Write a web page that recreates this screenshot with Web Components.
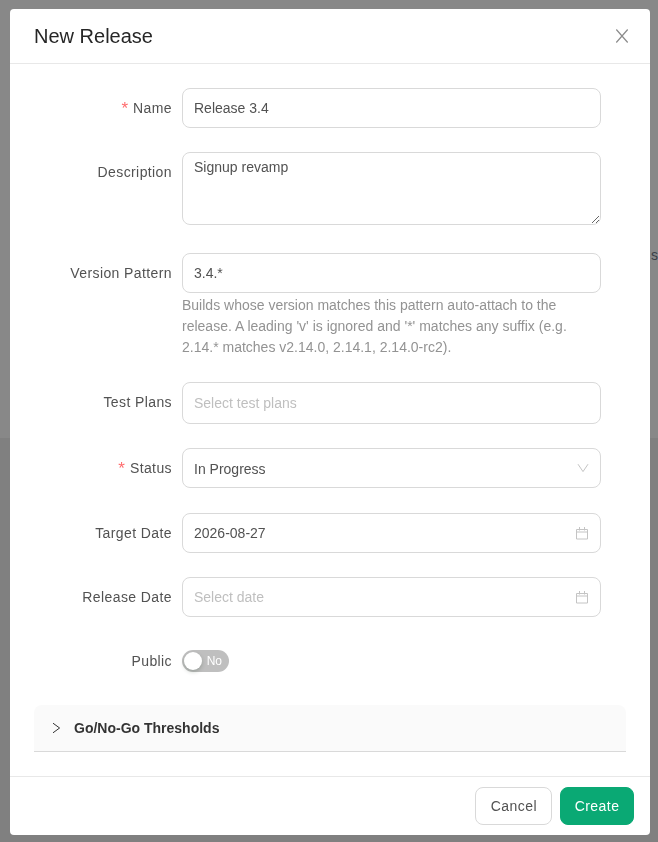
<!DOCTYPE html>
<html>
<head>
<meta charset="utf-8">
<title>New Release</title>
<style>
  html, body { margin: 0; height: 100%; overflow: hidden; }
  body { font-family: "Liberation Sans", Arial, sans-serif; }
</style>
</head>
<body>
<release-backdrop>
  <release-modal heading="New Release">
    <form-row label="Name" required><text-box>Release 3.4</text-box></form-row>
    <form-row label="Description" gap="28"><text-area-box>Signup revamp</text-area-box></form-row>
    <form-row label="Version Pattern">
      <text-box>3.4.*</text-box>
      <span slot="help">Builds whose version matches this pattern auto-attach to the release. A leading 'v' is ignored and '*' matches any suffix (e.g. 2.14.* matches v2.14.0, 2.14.1, 2.14.0-rc2).</span>
    </form-row>
    <form-row label="Test Plans"><text-box placeholder="Select test plans" tall></text-box></form-row>
    <form-row label="Status" required gap="25"><text-box icon="chevron" select>In Progress</text-box></form-row>
    <form-row label="Target Date"><text-box icon="calendar">2026-08-27</text-box></form-row>
    <form-row label="Release Date"><text-box icon="calendar" placeholder="Select date"></text-box></form-row>
    <form-row label="Public"><toggle-switch>No</toggle-switch></form-row>
    <collapse-panel>Go/No-Go Thresholds</collapse-panel>
    <action-button slot="footer">Cancel</action-button>
    <action-button slot="footer" primary>Create</action-button>
  </release-modal>
</release-backdrop>

<script>
// small helper, every element does the same thing in its constructor
function shadow(el, html) {
  el.attachShadow({ mode: 'open' }).innerHTML = html
}

const ICONS = {
  chevron: `<svg width="12" height="12" viewBox="0 0 12 12" fill="none" stroke="#c4c4c4" stroke-width="1"><path d="M1 2.2 6 9.6l5-7.4"/></svg>`,
  calendar: `<svg width="14" height="14" viewBox="0 0 14 14" fill="none" stroke="#c4c4c4" stroke-width="1"><path d="M1.5 3.5h11v9.5h-11zM1.5 6h11M4.5 1v3.5M9.5 1v3.5"/></svg>`,
}

class ReleaseBackdrop extends HTMLElement {
  constructor() {
    super()
    shadow(this, `
      <style>
        :host {
          display: block;
          height: 842px;
          padding: 9px 8px 7px 10px;
          box-sizing: border-box;
          position: relative;
          background: linear-gradient(#888 0 438px, #808080 438px);
        }
        .peek { position: absolute; left: 651px; top: 247px; font-size: 14px; color: #3a4048; }
      </style>
      <span class="peek">s</span>
      <slot></slot>
    `)
  }
}

class ReleaseModal extends HTMLElement {
  constructor() {
    super()
    shadow(this, `
      <style>
        :host {
          display: flex;
          flex-direction: column;
          position: relative;
          height: 826px;
          background: #fff;
          border-radius: 4px;
          overflow: hidden;
          will-change: transform;
        }
        header {
          flex: none;
          display: flex;
          align-items: center;
          justify-content: space-between;
          height: 54px;
          padding: 0 20px 0 24px;
          border-bottom: 1px solid #e8e8e8;
          font-size: 20px;
          color: #262626;
        }
        button { all: unset; display: flex; }
        main { flex: 1; min-height: 0; padding: 24px 24px 0; }
        footer {
          flex: none;
          display: flex;
          justify-content: flex-end;
          gap: 8px;
          padding: 10px 16px;
          height: 38px;
          border-top: 1px solid #e8e8e8;
        }
      </style>
      <header>
        <span></span>
        <button aria-label="Close"><svg width="16" height="16" viewBox="0 0 16 16" fill="none" stroke="#8c8c8c" stroke-width="1.2"><path d="M2.3 1.5 13.7 14.5M13.7 1.5 2.3 14.5"/></svg></button>
      </header>
      <main><slot></slot></main>
      <footer><slot name="footer"></slot></footer>
    `)
    this.shadowRoot.querySelector('header span').textContent = this.getAttribute('heading')
  }
}

class FormRow extends HTMLElement {
  constructor() {
    super()
    shadow(this, `
      <style>
        :host {
          display: grid;
          grid-template-columns: 138px 419px;
          column-gap: 10px;
          font-size: 14px;
          letter-spacing: .4px;
          color: #525252;
        }
        label {
          display: flex;
          justify-content: flex-end;
          align-items: center;
          height: 40px;
        }
        i { color: #ff6b6d; font-style: normal; margin-right: 5px; font-size: 17px; line-height: 1; letter-spacing: 0; }
        ::slotted(span) { display: block; margin-top: 2px; font-size: 14px; line-height: 21px; letter-spacing: 0; color: #939393; }
      </style>
      <label></label>
      <div><slot></slot><slot name="help"></slot></div>
    `)
    const label = this.shadowRoot.querySelector('label')
    label.innerHTML = (this.hasAttribute('required') ? '<i>*</i>' : '') + this.getAttribute('label')
    this.style.marginBottom = (this.getAttribute('gap') || 24) + 'px'
  }
}

class TextBox extends HTMLElement {
  constructor() {
    super()
    const icon = ICONS[this.getAttribute('icon')] || ''
    const placeholder = this.getAttribute('placeholder') || ''
    shadow(this, `
      <style>
        :host {
          display: flex;
          align-items: center;
          justify-content: space-between;
          box-sizing: border-box;
          height: 40px;
          padding: 0 11px;
          border: 1px solid #d9d9d9;
          border-radius: 8px;
          background: #fff;
          font-size: 14px;
          letter-spacing: 0;
          color: #525252;
        }
        :host([tall]) { height: 42px; }
        :host([select]) span { padding-top: 2px; }
        .ph { color: #bfbfbf; }
        svg { display: block; }
      </style>
      <span><slot></slot><span class="ph">${placeholder}</span></span>
      ${icon}
    `)
  }
}

class TextAreaBox extends HTMLElement {
  constructor() {
    super()
    shadow(this, `
      <style>
        :host { display: block; height: 73px; }
        textarea {
          display: block;
          box-sizing: border-box;
          width: 100%;
          height: 73px;
          padding: 4px 11px;
          border: 1px solid #d9d9d9;
          border-radius: 8px;
          outline: none;
          font: 14px/21px "Liberation Sans", Arial, sans-serif;
          color: #525252;
        }
      </style>
      <textarea></textarea>
    `)
    this.shadowRoot.querySelector('textarea').textContent = this.textContent
  }
}

class ToggleSwitch extends HTMLElement {
  constructor() {
    super()
    shadow(this, `
      <style>
        :host {
          display: flex;
          align-items: center;
          box-sizing: border-box;
          width: 47px;
          height: 22px;
          margin-top: 9px;
          padding: 0 7px 0 2px;
          justify-content: space-between;
          border-radius: 11px;
          background: #bfbfbf;
          font-size: 12px;
          letter-spacing: 0;
          color: #fff;
        }
        b { width: 18px; height: 18px; border-radius: 50%; background: #fff; box-shadow: 0 2px 4px rgba(0, 35, 11, .2); }
      </style>
      <b></b><slot></slot>
    `)
  }
}

class CollapsePanel extends HTMLElement {
  constructor() {
    super()
    shadow(this, `
      <style>
        :host {
          display: flex;
          align-items: center;
          gap: 13px;
          box-sizing: border-box;
          height: 47px;
          margin-bottom: 24px;
          padding: 0 16px;
          background: #fafafa;
          border-bottom: 1px solid #d9d9d9;
          border-radius: 8px 8px 0 0;
          font-size: 14px;
          font-weight: 700;
          color: #333;
        }
        svg { display: block; }
      </style>
      <svg width="11" height="12" viewBox="0 0 11 12" fill="none" stroke="#333" stroke-width="1"><path d="M3 1.2 9.6 6 3 10.8"/></svg>
      <slot></slot>
    `)
  }
}

class ActionButton extends HTMLElement {
  constructor() {
    super()
    shadow(this, `
      <style>
        :host {
          display: flex;
          align-items: center;
          box-sizing: border-box;
          height: 38px;
          padding: 0 14px 0 15px;
          border: 1px solid #d9d9d9;
          border-radius: 8px;
          background: #fff;
          font-size: 14px;
          letter-spacing: .45px;
          color: #525252;
        }
        :host([primary]) { padding: 0 13.6px; background: #0aa974; border-color: #0aa974; color: #fff; }
      </style>
      <slot></slot>
    `)
  }
}

customElements.define('release-backdrop', ReleaseBackdrop)
customElements.define('release-modal', ReleaseModal)
customElements.define('form-row', FormRow)
customElements.define('text-box', TextBox)
customElements.define('text-area-box', TextAreaBox)
customElements.define('toggle-switch', ToggleSwitch)
customElements.define('collapse-panel', CollapsePanel)
customElements.define('action-button', ActionButton)
</script>
</body>
</html>
